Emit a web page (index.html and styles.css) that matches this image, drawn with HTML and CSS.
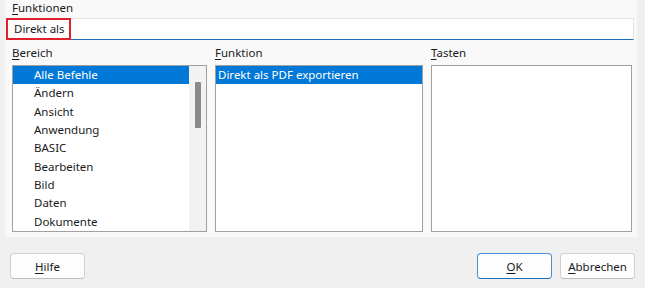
FILE: index.html
```html
<!DOCTYPE html>
<html lang="de">

<head>
    <meta charset="UTF-8">
    <title>Tastatur anpassen</title>
    <link rel="stylesheet" href="styles.css">
</head>

<body>
    <div class="panel">
        <div class="caption title"><u>F</u>unktionen</div>
        <div class="search">
            <span class="search-text">Direkt als</span>
        </div>

        <div class="columns">
            <div class="caption col-label"><u>B</u>ereich</div>
            <div class="caption col-label"><u>F</u>unktion</div>
            <div class="caption col-label"><u>T</u>asten</div>

            <div class="listbox category">
                <ul class="items">
                    <li class="selected">Alle Befehle</li>
                    <li>Ändern</li>
                    <li>Ansicht</li>
                    <li>Anwendung</li>
                    <li>BASIC</li>
                    <li>Bearbeiten</li>
                    <li>Bild</li>
                    <li>Daten</li>
                    <li>Dokumente</li>
                </ul>
                <div class="scrollbar">
                    <div class="thumb"></div>
                </div>
            </div>

            <div class="listbox">
                <ul class="items">
                    <li class="selected">Direkt als PDF exportieren</li>
                </ul>
            </div>

            <div class="listbox"></div>
        </div>
    </div>

    <div class="buttons">
        <button type="button" class="btn"><u>H</u>ilfe</button>
        <div class="spacer"></div>
        <button type="button" class="btn default"><u>O</u>K</button>
        <button type="button" class="btn"><u>A</u>bbrechen</button>
    </div>
</body>

</html>
```

FILE: styles.css
```css
/* Basic Reset */
* {
    margin: 0;
    padding: 0;
    box-sizing: border-box;
}

body {
    font-family: 'Noto Sans', 'Open Sans', sans-serif;
    font-size: 11.5px;
    color: #1a1a1a;
    background-color: #f0f0f0;
    width: 645px;
    height: 288px;
    overflow: hidden;
}

u {
    text-decoration-thickness: 1px;
    text-underline-offset: 2px;
}

/* Upper panel */
.panel {
    margin-left: 5px;
    width: 632px;
    height: 237px;
    background-color: #f9f9f9;
}

.caption {
    padding-left: 7px;
}

.title {
    height: 18px;
    line-height: 15px;
}

.search {
    margin-left: 1px;
    width: 628px;
    height: 22px;
    background-color: #fff;
    border: 1px solid #e5e5e5;
    border-bottom: 1px solid #1f6fbf;
    position: relative;
}

.search-text {
    position: absolute;
    left: -1px;
    top: -1px;
    width: 65px;
    height: 22px;
    border: 2px solid #e0202a;
    padding-left: 6px;
    line-height: 18px;
}

/* Three list columns */
.columns {
    display: grid;
    grid-template-columns: 195px 208px 201px;
    column-gap: 8px;
    margin-left: 7px;
}

.col-label {
    height: 25px;
    line-height: 22px;
    padding-top: 2px;
    padding-left: 0;
}

.listbox {
    height: 167px;
    background-color: #fff;
    border: 1px solid #a0a0a0;
    display: flex;
}

.items {
    list-style: none;
    flex: 1;
}

.items li {
    height: 18.33px;
    line-height: 18px;
    padding-left: 2px;
    white-space: nowrap;
}

.category .items li {
    padding-left: 21px;
}

.items li.selected {
    background-color: #0078d7;
    color: #fff;
}

.scrollbar {
    width: 17px;
    background-color: #f2f2f2;
    padding-top: 16px;
}

.thumb {
    width: 6px;
    height: 46px;
    margin-left: 6px;
    background-color: #8a8a8a;
    border-radius: 1px;
}

/* Buttons */
.buttons {
    display: flex;
    gap: 8px;
    padding: 16px 10px 0 10px;
}

.spacer {
    flex: 1;
}

.btn {
    width: 75px;
    height: 26px;
    font-family: inherit;
    font-size: 11.5px;
    color: #1a1a1a;
    background-color: #fdfdfd;
    border: 1px solid #d0d0d0;
    border-bottom-color: #bcbcbc;
    border-radius: 4px;
}

.btn.default {
    border-color: #4a90d0;
    border-bottom-color: #1f6fbf;
}
```
